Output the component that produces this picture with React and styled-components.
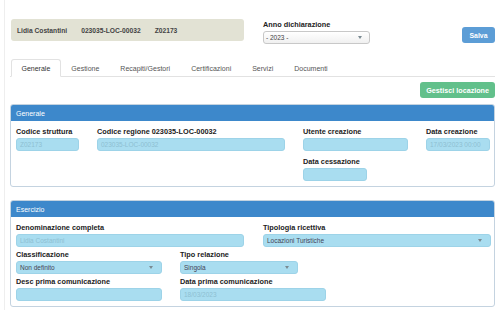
import React from "react";
import styled, { createGlobalStyle } from "styled-components";

const GlobalStyle = createGlobalStyle`
  body {
    margin: 0;
    background: #ffffff;
    font-family: "Liberation Sans", Arial, sans-serif;
    color: #222;
  }
`;

const Page = styled.div`
  margin-left: 4px;
  border-left: 1px solid #eeeeee;
  padding: 19px 5px 0 5px;
  min-height: 310px;
  box-sizing: border-box;
`;

const TopRow = styled.div`
  display: flex;
  align-items: flex-start;
`;

const InfoBox = styled.div`
  width: 233px;
  height: 22px;
  margin-left: 1px;
  background: #e2e2d4;
  border-radius: 3px;
  display: flex;
  align-items: center;
  padding-left: 6px;
  box-sizing: border-box;
  gap: 14px;
  font-size: 6.7px;
  font-weight: bold;
  color: #444;
`;

const YearGroup = styled.div`
  margin-left: 19px;
  margin-top: 1px;
  display: flex;
  flex-direction: column;
`;

const Label = styled.div`
  font-size: 7.3px;
  font-weight: bold;
  line-height: 9px;
  margin-bottom: 2px;
  color: #222;
  white-space: nowrap;
`;

const YearSelect = styled.div`
  width: 107px;
  height: 13px;
  box-sizing: border-box;
  border: 1px solid #c8c8c8;
  border-radius: 3px;
  background: linear-gradient(#ffffff, #f0f0f0);
  display: flex;
  align-items: center;
  justify-content: space-between;
  padding: 0 7px 0 2px;
  font-size: 6.5px;
  color: #444;
`;

const SaveButton = styled.button`
  margin-left: auto;
  margin-top: 8px;
  height: 16px;
  width: 33px;
  padding: 0;
  border: none;
  border-radius: 3px;
  background: #5c9dd6;
  color: #fff;
  font-family: inherit;
  font-size: 6.9px;
  font-weight: bold;
`;

const Tabs = styled.div`
  display: flex;
  margin-top: 15px;
  border-bottom: 1px solid #e2e2e2;
  height: 17px;
`;

const Tab = styled.div`
  height: 18px;
  box-sizing: border-box;
  padding: 0 9.5px;
  margin-left: ${(p) => (p.$first ? "1px" : "0")};
  display: flex;
  align-items: center;
  font-size: 7px;
  color: ${(p) => (p.$active ? "#333" : "#555")};
  background: ${(p) => (p.$active ? "#fff" : "transparent")};
  border: 1px solid ${(p) => (p.$active ? "#e2e2e2" : "transparent")};
  border-bottom-color: ${(p) => (p.$active ? "#fff" : "transparent")};
  border-radius: 3px 3px 0 0;
`;

const ActionRow = styled.div`
  display: flex;
  justify-content: flex-end;
  margin-top: 5px;
`;

const GreenButton = styled.button`
  height: 16px;
  padding: 0 6px;
  border: none;
  border-radius: 3px;
  background: #62c08b;
  color: #fff;
  font-family: inherit;
  font-size: 7.2px;
  font-weight: bold;
`;

const Panel = styled.div`
  margin-top: ${(p) => p.$top}px;
  border: 1px solid #c4d3e0;
  border-radius: 3px;
  overflow: hidden;
`;

const PanelHeader = styled.div`
  height: 16px;
  background: #3d88cb;
  color: #fff;
  font-size: 7px;
  display: flex;
  align-items: center;
  padding-left: 5px;
`;

const PanelBody = styled.div`
  padding: 6px 3px 5px 5px;
  display: flex;
  flex-direction: column;
  gap: ${(p) => p.$gap}px;
`;

const Grid = styled.div`
  display: grid;
  grid-template-columns: ${(p) => p.$cols};
  column-gap: ${(p) => p.$gap}px;
  row-gap: 6px;
`;

const Field = styled.div`
  display: flex;
  flex-direction: column;
  grid-column: ${(p) => p.$col || "auto"};
`;

const Input = styled.div`
  width: ${(p) => (p.$w ? `${p.$w}px` : "100%")};
  height: 13px;
  box-sizing: border-box;
  background: #a9ddf0;
  border: 1px solid #9dd3e8;
  border-radius: 3px;
  display: flex;
  align-items: center;
  justify-content: space-between;
  padding: 0 8px 0 3px;
  font-size: 6.5px;
  color: ${(p) => (p.$dark ? "#445" : "#8ebfd2")};
  white-space: nowrap;
  overflow: hidden;
`;

const Caret = () => (
  <svg width="4" height="3" viewBox="0 0 4 3">
    <path d="M0 0 L4 0 L2 3 Z" fill="#7a8a92" />
  </svg>
);

export default function App() {
  return (
    <>
      <GlobalStyle />
      <Page>
        <TopRow>
          <InfoBox>
            <span>Lidia Costantini</span>
            <span>023035-LOC-00032</span>
            <span>Z02173</span>
          </InfoBox>
          <YearGroup>
            <Label>Anno dichiarazione</Label>
            <YearSelect>
              <span>- 2023 -</span>
              <Caret />
            </YearSelect>
          </YearGroup>
          <SaveButton>Salva</SaveButton>
        </TopRow>

        <Tabs>
          <Tab $active $first>Generale</Tab>
          <Tab>Gestione</Tab>
          <Tab>Recapiti/Gestori</Tab>
          <Tab>Certificazioni</Tab>
          <Tab>Servizi</Tab>
          <Tab>Documenti</Tab>
        </Tabs>

        <ActionRow>
          <GreenButton>Gestisci locazione</GreenButton>
        </ActionRow>

        <Panel $top={6}>
          <PanelHeader>Generale</PanelHeader>
          <PanelBody $gap={0}>
            <Grid $cols="63px 188px 105px 64px" $gap={18}>
              <Field>
                <Label>Codice struttura</Label>
                <Input>Z02173</Input>
              </Field>
              <Field>
                <Label>Codice regione 023035-LOC-00032</Label>
                <Input>023035-LOC-00032</Input>
              </Field>
              <Field>
                <Label>Utente creazione</Label>
                <Input />
              </Field>
              <Field>
                <Label>Data creazione</Label>
                <Input>17/03/2023 00:00</Input>
              </Field>
              <Field $col="3">
                <Label>Data cessazione</Label>
                <Input $w={64} />
              </Field>
            </Grid>
          </PanelBody>
        </Panel>

        <Panel $top={13}>
          <PanelHeader>Esercizio</PanelHeader>
          <PanelBody $gap={3}>
            <Grid $cols="1fr 1fr" $gap={19}>
              <Field>
                <Label>Denominazione completa</Label>
                <Input>Lidia Costantini</Input>
              </Field>
              <Field>
                <Label>Tipologia ricettiva</Label>
                <Input $dark>
                  <span>Locazioni Turistiche</span>
                  <Caret />
                </Input>
              </Field>
            </Grid>
            <Grid $cols="146px 146px" $gap={18}>
              <Field>
                <Label>Classificazione</Label>
                <Input $dark>
                  <span>Non definito</span>
                  <Caret />
                </Input>
              </Field>
              <Field>
                <Label>Tipo relazione</Label>
                <Input $dark $w={118}>
                  <span>Singola</span>
                  <Caret />
                </Input>
              </Field>
            </Grid>
            <Grid $cols="146px 146px" $gap={18}>
              <Field>
                <Label>Desc prima comunicazione</Label>
                <Input />
              </Field>
              <Field>
                <Label>Data prima comunicazione</Label>
                <Input>18/03/2023</Input>
              </Field>
            </Grid>
          </PanelBody>
        </Panel>
      </Page>
    </>
  );
}
